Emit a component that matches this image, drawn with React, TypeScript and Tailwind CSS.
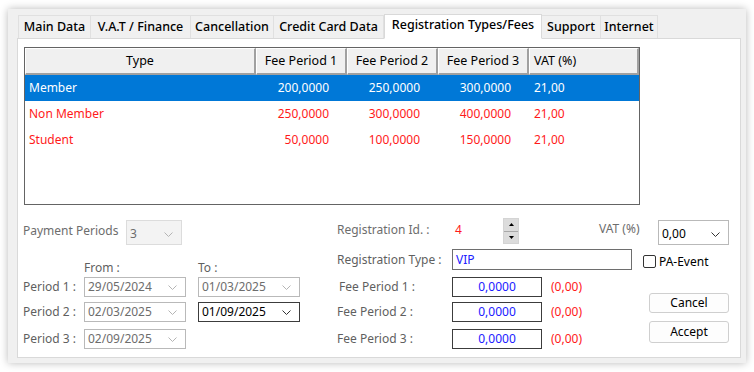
import React from "react";

const tabs = [
  { label: "Main Data", w: "w-[73px]" },
  { label: "V.A.T / Finance", w: "w-[101px]" },
  { label: "Cancellation", w: "w-[84px]" },
  { label: "Credit Card Data", w: "w-[111px]" },
  { label: "Registration Types/Fees", w: "w-[158px]", active: true },
  { label: "Support", w: "w-[60px]" },
  { label: "Internet", w: "w-[58px]" },
];

const rows = [
  { type: "Member", f1: "200,0000", f2: "250,0000", f3: "300,0000", vat: "21,00", selected: true },
  { type: "Non Member", f1: "250,0000", f2: "300,0000", f3: "400,0000", vat: "21,00" },
  { type: "Student", f1: "50,0000", f2: "100,0000", f3: "150,0000", vat: "21,00" },
];

const Chevron = ({ color }: { color: string }) => (
  <svg width="9" height="5" viewBox="0 0 9 5" fill="none">
    <path d="M0.5 0.5 L4.5 4.5 L8.5 0.5" stroke={color} strokeWidth="1" />
  </svg>
);

function Combo({
  value,
  className,
  disabled,
}: {
  value: string;
  className: string;
  disabled?: boolean;
}) {
  return (
    <div
      className={`flex items-center justify-between pl-[3px] pr-[8px] border ${className} ${
        disabled ? "text-[#6d6d6d]" : "text-black"
      }`}
    >
      <span>{value}</span>
      <Chevron color={disabled ? "#b4b4b4" : "#333333"} />
    </div>
  );
}

function HeaderCell({
  children,
  className,
}: {
  children: React.ReactNode;
  className: string;
}) {
  return (
    <div
      className={`h-full flex items-center bg-[#f0f0f0] border-t border-l border-t-white border-l-white border-r-2 border-b-2 border-r-[#a0a0a0] border-b-[#a0a0a0] ${className}`}
    >
      {children}
    </div>
  );
}

function DateRow({
  label,
  from,
  to,
  toEnabled,
  className,
}: {
  label: string;
  from: string;
  to?: string;
  toEnabled?: boolean;
  className: string;
}) {
  return (
    <div className={`flex items-center h-[20px] ${className}`}>
      <span className="w-[61px] text-[#5f5f5f]">{label}</span>
      <Combo
        value={from}
        disabled
        className="w-[102px] h-full border-[#b9b9b9] bg-white"
      />
      {to && (
        <Combo
          value={to}
          disabled={!toEnabled}
          className={`ml-[12px] w-[102px] h-full bg-white ${
            toEnabled ? "border-[#3c3c3c]" : "border-[#b9b9b9]"
          }`}
        />
      )}
    </div>
  );
}

function FeeRow({
  label,
  className,
  labelClass,
}: {
  label: string;
  className: string;
  labelClass: string;
}) {
  return (
    <div className={`flex items-center h-[20px] ${className}`}>
      <span className={`text-[#5f5f5f] ${labelClass}`}>{label}</span>
      <div className="w-[90px] h-full border border-[#3c3c3c] bg-white flex items-center justify-center text-[#2020ff]">
        0,0000
      </div>
      <span className="ml-[9px] text-[#ff1a1a]">(0,00)</span>
    </div>
  );
}

export default function App() {
  return (
    <div className="w-[754px] h-[372px] bg-white pt-[9px] pl-[8px] font-['Noto_Sans',sans-serif] text-[12px] leading-none">
      <div className="w-[738px] h-[354px] bg-[#f0f0f0] shadow-[0_0_8px_rgba(0,0,0,0.28)] pl-[9px] pt-[4px]">
        <div className="flex items-end h-[25px] pl-[1px] text-[12.5px]">
          {tabs.map((t) =>
            t.active ? (
              <div
                key={t.label}
                className={`${t.w} h-[25px] -mb-px relative z-10 bg-white border border-[#d9d9d9] border-b-white flex items-center justify-center text-black font-medium pb-[3px]`}
              >
                {t.label}
              </div>
            ) : (
              <div
                key={t.label}
                className={`${t.w} h-[23px] bg-[#f0f0f0] border border-[#e0e0e0] border-b-0 -ml-px first:ml-0 flex items-center justify-center text-black font-medium pt-[1px]`}
              >
                {t.label}
              </div>
            )
          )}
        </div>

        <div className="w-[724px] h-[320px] bg-white border border-[#d9d9d9] pl-[6px] pt-[8px]">
          <div className="w-[616px] h-[158px] border border-[#646464] bg-white flex flex-col">
            <div className="flex h-[27px] shrink-0 text-[12.5px]">
              <HeaderCell className="w-[231px] justify-center">Type</HeaderCell>
              <HeaderCell className="w-[91px] justify-center">Fee Period 1</HeaderCell>
              <HeaderCell className="w-[91px] justify-center">Fee Period 2</HeaderCell>
              <HeaderCell className="w-[91px] justify-center">Fee Period 3</HeaderCell>
              <HeaderCell className="flex-1 pl-[4px]">VAT (%)</HeaderCell>
            </div>
            {rows.map((r) => (
              <div
                key={r.type}
                className={`flex items-center h-[26px] shrink-0 ${
                  r.selected ? "bg-[#0078d7] text-white" : "text-[#ff1a1a]"
                }`}
              >
                <span className="w-[231px] pl-[4px]">{r.type}</span>
                <span className="w-[91px] text-right pr-[18px]">{r.f1}</span>
                <span className="w-[91px] text-right pr-[18px]">{r.f2}</span>
                <span className="w-[91px] text-right pr-[18px]">{r.f3}</span>
                <span className="pl-[5px]">{r.vat}</span>
              </div>
            ))}
          </div>

          <div className="flex">
            {/* left: payment periods */}
            <div className="w-[314px] -ml-px flex flex-col">
              <div className="flex items-start mt-[15px] h-[25px]">
                <span className="w-[103px] pt-[5px] text-[#6d6d6d]">Payment Periods</span>
                <Combo
                  value="3"
                  disabled
                  className="w-[56px] h-[25px] border-[#dcdcdc] bg-[#f3f3f3] pt-[3px]"
                />
              </div>
              <div className="flex items-center h-[16px] mt-[15px] text-[#5f5f5f]">
                <span className="ml-[61px] w-[114px]">From :</span>
                <span>To :</span>
              </div>
              <DateRow className="mt-px" label="Period 1 :" from="29/05/2024" to="01/03/2025" />
              <DateRow className="mt-[5px]" label="Period 2 :" from="02/03/2025" to="01/09/2025" toEnabled />
              <DateRow className="mt-[7px]" label="Period 3 :" from="02/09/2025" />
            </div>

            {/* right: registration type */}
            <div className="flex-1 pr-[11px] flex flex-col">
              <div className="flex items-start mt-[13px] h-[27px]">
                <span className="w-[118px] pt-[6px] text-[#6d6d6d]">Registration Id. :</span>
                <span className="w-[48px] pt-[6px] text-[#ff1a1a]">4</span>
                <div className="w-[16px] h-[26px] flex flex-col border border-[#d4d4d4]">
                  <div className="flex-1 bg-[#dcdcdc] border-b border-[#a8a8a8] flex items-center justify-center">
                    <svg width="5" height="3" viewBox="0 0 5 3">
                      <path d="M0 3 L2.5 0 L5 3 Z" fill="#000" />
                    </svg>
                  </div>
                  <div className="flex-1 bg-[#dcdcdc] flex items-center justify-center">
                    <svg width="5" height="3" viewBox="0 0 5 3">
                      <path d="M0 0 L2.5 3 L5 0 Z" fill="#000" />
                    </svg>
                  </div>
                </div>
                <span className="ml-[80px] w-[59px] pt-[5px] text-[#6d6d6d]">VAT (%)</span>
                <Combo
                  value="0,00"
                  className="mt-[2px] w-[71px] h-[25px] border-[#b9b9b9] bg-white pt-[3px]"
                />
              </div>
              <div className="flex items-center mt-[4px] h-[21px]">
                <span className="w-[115px] text-[#5f5f5f]">Registration Type :</span>
                <div className="w-[180px] h-full border border-[#6e6e6e] bg-white flex items-center pl-[3px] text-[#2020ff]">
                  VIP
                </div>
                <div className="ml-[11px] mt-[4px] w-[13px] h-[13px] rounded-[2px] border border-[#333] bg-white" />
                <span className="ml-[3px] mt-[4px] text-black">PA-Event</span>
              </div>
              <div className="flex mt-[7px]">
                <div className="flex flex-col">
                  <FeeRow labelClass="w-[113px] ml-[2px]" className="" label="Fee Period 1 :" />
                  <FeeRow labelClass="w-[115px]" className="mt-[5px]" label="Fee Period 2 :" />
                  <FeeRow labelClass="w-[115px]" className="mt-[7px]" label="Fee Period 3 :" />
                </div>
                <div className="ml-auto flex flex-col pt-[16px]">
                  <button className="w-[80px] h-[20px] rounded-[3px] border border-[#cfcfcf] bg-[#fdfdfd] text-black">
                    Cancel
                  </button>
                  <button className="mt-[8px] w-[80px] h-[22px] rounded-[3px] border border-[#cfcfcf] bg-[#fdfdfd] text-black">
                    Accept
                  </button>
                </div>
              </div>
            </div>
          </div>
        </div>
      </div>
    </div>
  );
}
